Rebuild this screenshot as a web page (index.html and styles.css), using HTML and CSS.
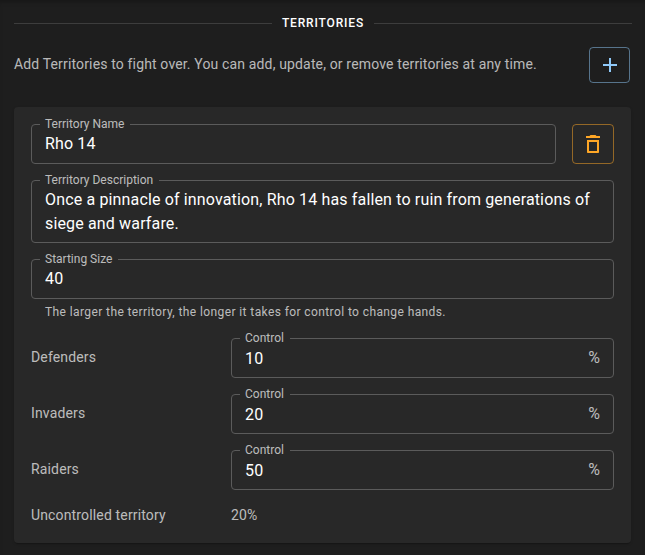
FILE: index.html
```html
<!DOCTYPE html>
<html lang="en">
<head>
  <meta charset="UTF-8" />
  <title>Territories</title>
  <link rel="stylesheet" href="styles.css">
</head>
<body>
  <div class="divider">
    <span class="divider-text">TERRITORIES</span>
  </div>

  <div class="intro">
    <p>Add Territories to fight over. You can add, update, or remove territories at any time.</p>
    <button class="icon-btn add-btn" aria-label="Add territory">
      <svg width="24" height="24" viewBox="0 0 24 24"><path d="M19 13h-6v6h-2v-6H5v-2h6V5h2v6h6v2z"/></svg>
    </button>
  </div>

  <div class="card">
    <div class="name-row">
      <fieldset class="field grow">
        <legend>Territory Name</legend>
        <input type="text" value="Rho 14">
      </fieldset>
      <button class="icon-btn delete-btn" aria-label="Delete territory">
        <svg width="24" height="24" viewBox="0 0 24 24"><path d="M15.5 4l-1-1h-5l-1 1H5v2h14V4h-3.5zM6 8v12c0 .6.4 1 1 1h10c.6 0 1-.4 1-1V8H6zm2 2h8v9H8v-9z"/></svg>
      </button>
    </div>

    <fieldset class="field">
      <legend>Territory Description</legend>
      <textarea rows="2">Once a pinnacle of innovation, Rho 14 has fallen to ruin from generations of siege and warfare.</textarea>
    </fieldset>

    <fieldset class="field">
      <legend>Starting Size</legend>
      <input type="text" value="40">
    </fieldset>
    <p class="helper">The larger the territory, the longer it takes for control to change hands.</p>

    <div class="control-row">
      <span class="row-label">Defenders</span>
      <fieldset class="field">
        <legend>Control</legend>
        <div class="with-unit"><input type="text" value="10"><span class="unit">%</span></div>
      </fieldset>
    </div>
    <div class="control-row">
      <span class="row-label">Invaders</span>
      <fieldset class="field">
        <legend>Control</legend>
        <div class="with-unit"><input type="text" value="20"><span class="unit">%</span></div>
      </fieldset>
    </div>
    <div class="control-row">
      <span class="row-label">Raiders</span>
      <fieldset class="field">
        <legend>Control</legend>
        <div class="with-unit"><input type="text" value="50"><span class="unit">%</span></div>
      </fieldset>
    </div>

    <div class="summary-row">
      <span class="row-label">Uncontrolled territory</span>
      <span class="row-label">20%</span>
    </div>
  </div>
</body>
</html>
```

FILE: styles.css
```css
* {
  box-sizing: border-box;
}
html, body {
  height: 555px;
  overflow: hidden;
}
body {
  margin: 0;
  padding: 14px 14px 0;
  background: #1e1e1e;
  box-shadow: inset 0 4px 4px -2px rgba(0,0,0,0.25);
  font-family: Roboto, sans-serif;
  color: #fff;
}
.divider {
  display: flex;
  align-items: center;
  height: 18px;
  margin-right: -1px;
  font-size: 12px;
  font-weight: 500;
  letter-spacing: 0.85px;
}
.divider::before, .divider::after {
  content: "";
  flex: 1;
  border-top: 1px solid #3d3d3d;
}
.divider-text {
  padding: 0 10px;
}
.intro {
  display: flex;
  align-items: center;
  justify-content: space-between;
  margin-top: 15px;
  padding-right: 1px;
}
.intro p {
  margin: 0 0 2px;
  font-size: 14px;
  letter-spacing: 0.15px;
  color: rgba(255,255,255,0.7);
}
.icon-btn {
  display: flex;
  align-items: center;
  justify-content: center;
  padding: 0;
  background: none;
  border-radius: 4px;
}
.add-btn {
  width: 41px;
  height: 36px;
  border: 1px solid rgba(144,202,249,0.5);
}
.add-btn svg {
  fill: #90caf9;
}
.delete-btn {
  width: 42px;
  height: 40px;
  margin-top: 7px;
  border: 1px solid rgba(255,167,38,0.5);
}
.delete-btn svg {
  fill: #ffa726;
}
.card {
  margin-top: 24px;
  padding: 10px 17px 0;
  height: 436px;
  background: #282828;
  border-radius: 4px;
  box-shadow: 0 2px 1px -1px rgba(0,0,0,0.2), 0 1px 3px rgba(0,0,0,0.12);
}
.name-row {
  display: flex;
  gap: 16px;
}
.grow {
  flex: 1;
  min-width: 0;
}
.field {
  margin: 0 0 9px;
  padding: 0 13px;
  min-width: 0;
  border: 1px solid #5b5b5b;
  border-radius: 4px;
}
.field legend {
  margin-left: -5px;
  padding: 0 6px 0 5px;
  font-size: 12px;
  line-height: 14px;
  color: rgba(255,255,255,0.7);
}
.field input, .field textarea {
  display: block;
  width: 100%;
  padding: 0;
  border: none;
  outline: none;
  background: none;
  resize: none;
  overflow: hidden;
  font-family: Roboto, sans-serif;
  font-size: 16px;
  letter-spacing: 0.15px;
  line-height: 24px;
  color: #fff;
}
.field input {
  height: 32px;
  padding-bottom: 8px;
}
.field textarea {
  height: 55px;
  padding: 1px 0 6px;
}
.helper {
  margin: -6px 0 9px;
  padding-left: 14px;
  font-size: 12px;
  letter-spacing: 0.4px;
  line-height: 20px;
  color: rgba(255,255,255,0.7);
}
.control-row {
  display: grid;
  grid-template-columns: 200px 1fr;
  align-items: center;
}
.control-row .row-label {
  padding-bottom: 4px;
}
.with-unit {
  display: flex;
  align-items: flex-start;
  padding-top: 1px;
}
.with-unit input {
  height: 31px;
  padding-bottom: 7px;
}
.unit {
  margin-left: 2px;
  font-size: 16px;
  line-height: 24px;
  color: rgba(255,255,255,0.7);
}
.row-label {
  font-size: 14px;
  letter-spacing: 0.15px;
  color: rgba(255,255,255,0.7);
}
.summary-row {
  display: grid;
  grid-template-columns: 200px 1fr;
  margin-top: 8px;
}
```
